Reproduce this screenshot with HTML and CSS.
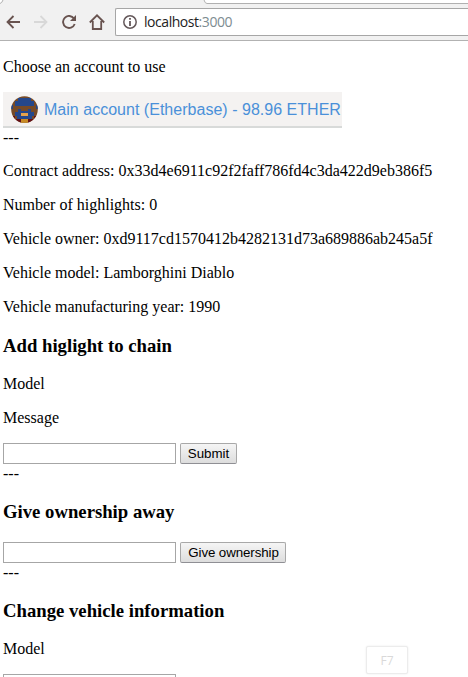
FILE: index.html
```html
<!DOCTYPE html>
<html lang="en">
<head>
<meta charset="utf-8">
<title>localhost:3000</title>
<link rel="stylesheet" href="styles.css">
</head>
<body>
<header class="toolbar">
  <svg class="tab-edge" width="468" height="4" viewBox="0 0 468 4"><path d="M0 0H3L1 3L0 3.5Z" fill="#fff"/><path d="M203.5 0Q205 3.5 207 3.5H468V0Z" fill="#fff"/><path d="M3 0Q2 3 0 3.5M204 0Q205 3.5 207 3.5H468" fill="none" stroke="#b0b0b0"/></svg>
  <nav class="nav">
    <svg width="14" height="14" viewBox="0 0 14 14" fill="none" stroke="#68534f" stroke-width="1.8"><path d="M14 7H2M7.5 1L1.5 7L7.5 13"/></svg>
    <svg width="14" height="14" viewBox="0 0 14 14" fill="none" stroke="#d8d8d8" stroke-width="1.8"><path d="M0 7H12M6.5 1L12.5 7L6.5 13"/></svg>
    <svg width="14" height="14" viewBox="0 0 14 14" fill="none" stroke="#68534f" stroke-width="1.9"><path d="M12 3.5A6 6 0 1 0 12.7 9"/><path d="M14 0V6H8Z" fill="#68534f" stroke="none"/></svg>
    <svg class="home" width="16" height="16" viewBox="0 0 16 16" fill="none" stroke="#68534f" stroke-width="1.8"><path d="M.8 8.5L8 1.3L15.2 8.5M3.8 7V15H12.2V7"/></svg>
  </nav>
  <div class="address">
    <svg width="14" height="14" viewBox="0 0 14 14" fill="none" stroke="#64585a" stroke-width="1.5"><circle cx="7" cy="7" r="6.2"/><path d="M7 6V11M7 3V4.8" stroke-width="1.8"/></svg>
    <span class="url">localhost<span class="port">:3000</span></span>
  </div>
</header>
<main class="page">
  <p>Choose an account to use</p>
  <div class="account">
    <svg class="avatar" width="27" height="27" viewBox="0 0 27 27">
      <defs><clipPath id="round"><circle cx="13.5" cy="13.5" r="13.3"/></clipPath></defs>
      <g clip-path="url(#round)">
        <path fill="#764a27" d="M0 0H27V27H0Z"/>
        <path fill="#24478b" d="M7 2H20V5H23V10H4V5H7Z"/>
        <path fill="#24478b" d="M7 13H10V15H17V13H20V16H23V20H21V23H6V20H4V16H7Z"/>
        <path fill="#24478b" d="M0 9H2V13H0ZM25 9H27V13H25Z"/>
        <path fill="#e5a34b" d="M10 17H17V20H10Z"/>
        <path fill="#641016" d="M0 20H4V23H10V27H0ZM23 20H27V27H17V23H23Z"/>
        <path fill="#c88b25" d="M10 23H17V27H10Z"/>
      </g>
    </svg>
    <span class="account-name">Main account (Etherbase) - 98.96 ETHER</span>
  </div>
  <div class="divider">---</div>
  <p>Contract address: 0x33d4e6911c92f2faff786fd4c3da422d9eb386f5</p>
  <p>Number of highlights: 0</p>
  <p>Vehicle owner: 0xd9117cd1570412b4282131d73a689886ab245a5f</p>
  <p>Vehicle model: Lamborghini Diablo</p>
  <p>Vehicle manufacturing year: 1990</p>
  <h3>Add higlight to chain</h3>
  <p>Model</p>
  <p>Message</p>
  <form class="row"><input type="text"><button class="submit" type="button">Submit</button></form>
  <div class="divider">---</div>
  <h3 class="before-form">Give ownership away</h3>
  <form class="row"><input type="text"><button class="give" type="button">Give ownership</button></form>
  <div class="divider">---</div>
  <h3>Change vehicle information</h3>
  <p>Model</p>
  <form class="row"><input type="text"></form>
</main>
<div class="key">F7</div>
</body>
</html>
```
FILE: styles.css
```css
* { box-sizing: border-box; }
html, body { height: 677px; overflow: hidden; }
body {
  margin: 0;
  position: relative;
  background: #fff;
  color: #000;
  font: 16px/18px "Liberation Serif", "Times New Roman", serif;
}
svg { display: block; flex: none; }
.toolbar {
  position: relative;
  display: flex;
  height: 41px;
  padding: 8px 0 0 6px;
  background: #f1f1f1;
  border-bottom: 1px solid #b2b2b2;
}
.tab-edge { position: absolute; left: 0; top: 0; }
.nav { display: flex; align-items: center; gap: 14px; width: 109px; height: 28px; }
.home { margin-left: -1px; }
.address {
  display: flex;
  align-items: center;
  gap: 7px;
  flex: 1;
  height: 28px;
  padding-left: 7px;
  background: #fff;
  border: 1px solid #a6a6a6;
  border-right: 0;
  border-radius: 2px 0 0 2px;
}
.url { color: #222; font: 14px/20px "Open Sans", "Noto Sans", sans-serif; letter-spacing: -0.45px; white-space: nowrap; }
.port { color: #7d8c91; }
.page { padding: 17px 0 0 3px; }
p { margin: 0 0 16px; white-space: nowrap; }
h3 { margin: 0 0 19px; padding-top: 3px; font-size: 18.72px; line-height: 21px; white-space: nowrap; }
.before-form { margin-bottom: 20px; }
.account {
  display: flex;
  align-items: center;
  width: 339px;
  height: 36px;
  padding-left: 8px;
  gap: 6px;
  background: #f4f2f1;
  border-bottom: 2px solid #d8dad9;
}
.account-name { padding-top: 1px; color: #4a90d9; font: 16px/20px "Liberation Sans", Arial, sans-serif; letter-spacing: 0.02px; white-space: nowrap; }
.divider { height: 18px; margin-bottom: 16px; padding-top: 1px; }
.row { display: flex; gap: 4px; height: 21px; margin: 0; }
input { width: 173px; height: 21px; margin: 0; padding: 1px; border: 1px solid #a6a6a6; background: #fff; }
button {
  height: 21px;
  margin: 0;
  padding: 0;
  border: 1px solid #a8a8a8;
  border-bottom-color: #8f8f94;
  border-radius: 2px;
  background: linear-gradient(#f5f5f5, #dddddd);
  color: #000;
  font: 13.33px/18px "Liberation Sans", Arial, sans-serif;
  white-space: nowrap;
}
.submit { width: 57px; }
.give { width: 106px; padding-left: 1px; letter-spacing: -0.1px; }
.key {
  position: absolute;
  left: 366px;
  top: 646px;
  width: 42px;
  height: 28px;
  border: 1px solid #ececec;
  border-radius: 2px;
  box-shadow: 0 0 2px #e8e8e8;
  background: #fff;
  color: #d9d9d9;
  font: 12px/27px "Open Sans", sans-serif;
  text-align: center;
}
```
